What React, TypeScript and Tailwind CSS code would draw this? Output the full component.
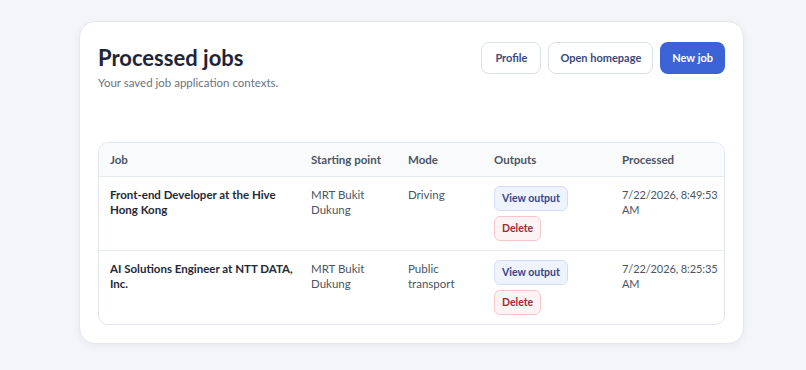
const jobs = [
  {
    title: "Front-end Developer at the Hive Hong Kong",
    start: "MRT Bukit Dukung",
    mode: "Driving",
    processed: "7/22/2026, 8:49:53 AM",
  },
  {
    title: "AI Solutions Engineer at NTT DATA, Inc.",
    start: "MRT Bukit Dukung",
    mode: "Public transport",
    processed: "7/22/2026, 8:25:35 AM",
  },
]

export default function App() {
  return (
    <div
      className="min-h-[370px] bg-[#f3f5f9] pt-[21px] pl-[79px] text-[#1f2937]"
      style={{ fontFamily: 'Lato, "Noto Sans", sans-serif' }}
    >
      <div className="w-[665px] h-[323px] rounded-[16px] border border-[#e3e8ef] bg-white px-[18px] pt-[19px] shadow-[0_2px_8px_rgba(15,23,42,0.05)]">
        <div className="flex items-start justify-between">
          <div>
            <h1 className="text-[22px] font-bold leading-[30px] text-[#1e2537] mt-[2px]">
              Processed jobs
            </h1>
            <p className="text-[11.5px] text-[#6b7280] mt-[1px]">Your saved job application contexts.</p>
          </div>
          <div className="flex gap-[7px] mt-px">
            <button className="h-[32px] px-[13px] rounded-[8px] border border-[#d9e0ea] bg-white text-[11px] font-bold text-[#3a4a7a]">
              Profile
            </button>
            <button className="h-[32px] px-[11px] rounded-[8px] border border-[#d9e0ea] bg-white text-[11px] font-bold text-[#3a4a7a]">
              Open homepage
            </button>
            <button className="h-[32px] px-[12px] rounded-[8px] bg-[#3b63d6] text-[11px] font-bold text-white">
              New job
            </button>
          </div>
        </div>

        <div className="mt-[51px] rounded-[10px] border border-[#e2e7ee] overflow-hidden">
          <table className="w-full table-fixed text-[11.5px] leading-[15px]">
            <colgroup>
              <col className="w-[201px]" />
              <col className="w-[97px]" />
              <col className="w-[86px]" />
              <col className="w-[128px]" />
              <col />
            </colgroup>
            <thead>
              <tr className="h-[33px] bg-[#f8fafc] border-b border-[#e6ebf1] text-left text-[#4b5563]">
                <th className="px-[11px] font-bold">Job</th>
                <th className="px-[11px] font-bold">Starting point</th>
                <th className="px-[11px] font-bold">Mode</th>
                <th className="px-[11px] font-bold">Outputs</th>
                <th className="px-[11px] font-bold">Processed</th>
              </tr>
            </thead>
            <tbody>
              {jobs.map((j, i) => (
                <tr key={i} className={i > 0 ? "border-t border-[#e6ebf1] align-top" : "align-top"}>
                  <td className="pl-[11px] pr-[2px] pt-[10px] pb-[9px] font-bold text-[#1f2937]">{j.title}</td>
                  <td className="px-[11px] pt-[10px] text-[#4b5563]">{j.start}</td>
                  <td className="px-[11px] pt-[10px] text-[#4b5563]">{j.mode}</td>
                  <td className="px-[11px] pt-[9px] pb-[9px]">
                    <div className="flex flex-col items-start gap-[5px]">
                      <button className="h-[25px] px-[7px] rounded-[6px] border border-[#d3dcf5] bg-[#eff3fd] text-[10.5px] font-bold text-[#34468a]">
                        View output
                      </button>
                      <button className="h-[25px] px-[7px] rounded-[6px] border border-[#f5c6cc] bg-[#fdf3f4] text-[10.5px] font-bold text-[#9b2c3c]">
                        Delete
                      </button>
                    </div>
                  </td>
                  <td className="pl-[11px] pr-0 pt-[10px] text-[11px] tracking-[-0.1px] text-[#4b5563]">{j.processed}</td>
                </tr>
              ))}
            </tbody>
          </table>
        </div>
      </div>
    </div>
  )
}
